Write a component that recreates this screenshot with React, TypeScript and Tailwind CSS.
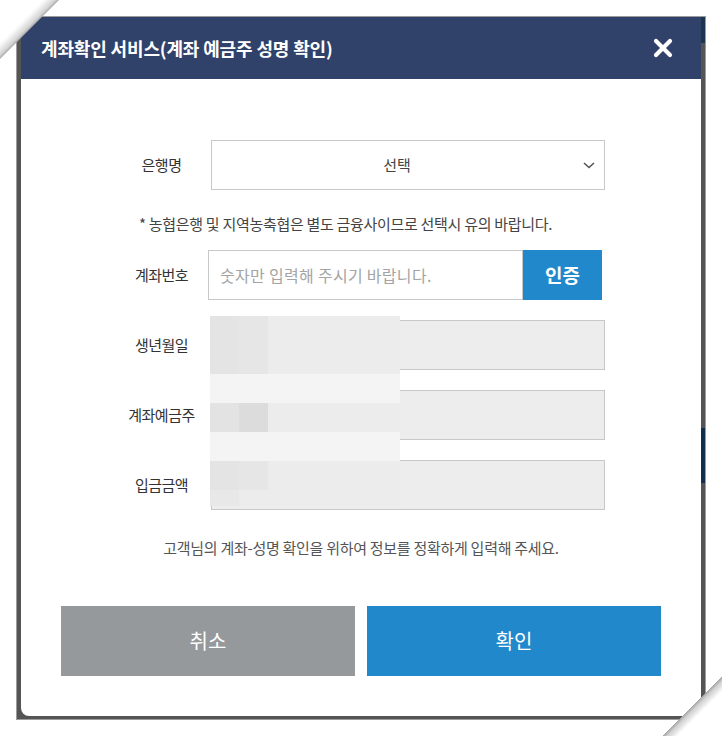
import React from 'react';

// 이름이 가려진 영역(모자이크) 셀
const mosaicRows: { h: string; cells: string[] }[] = [
  { h: 'h-[58px]', cells: ['bg-[#e4e4e4]', 'bg-[#e6e6e6]', 'bg-[#ececec]'] },
  { h: 'h-[29px]', cells: ['bg-[#f4f4f4]', 'bg-[#f4f4f4]', 'bg-[#f4f4f4]'] },
  { h: 'h-[29px]', cells: ['bg-[#e3e3e3]', 'bg-[#dcdcdc]', 'bg-[#ececec]'] },
  { h: 'h-[29px]', cells: ['bg-[#f4f4f4]', 'bg-[#f4f4f4]', 'bg-[#f4f4f4]'] },
  { h: 'h-[29px]', cells: ['bg-[#e4e4e4]', 'bg-[#e6e6e6]', 'bg-[#ececec]'] },
  { h: 'h-[16px]', cells: ['bg-[#e8e8e8]', 'bg-[#ececec]', 'bg-[#ececec]'] },
];

const cellWidths = ['w-[29px]', 'w-[29px]', 'w-[132px]'];

function Label({ children }: { children: React.ReactNode }) {
  return (
    <div className="w-[99px] shrink-0 text-center text-[15px] tracking-[-0.5px] text-[#333]">
      {children}
    </div>
  );
}

function ReadonlyRow({ label }: { label: string }) {
  return (
    <div className="flex items-center h-[50px]">
      <Label>{label}</Label>
      <div className="w-[394px] h-[50px] bg-[#ededed] border border-[#c8c8c8]" />
    </div>
  );
}

export default function App() {
  return (
    <div className="relative min-h-screen bg-white pt-[16px] pl-[16px] overflow-hidden font-['Noto_Sans_CJK_KR','Noto_Sans',sans-serif]">
      {/* frame */}
      <div className="relative w-[690px] h-[704px] border border-[#9c9c9c] bg-[#555555] pl-[4px] pr-[4px] pb-[3px]">
        <div className="absolute right-0 top-0 w-[4px] h-[26px] bg-[#1b3552]" />
        <div className="absolute right-0 top-[411px] w-[4px] h-[55px] bg-[#0d3050]" />

        {/* modal */}
        <div className="relative w-[680px] h-[699px] bg-white rounded-b-lg overflow-hidden">
          <div className="flex items-center justify-between h-[62px] bg-[#30426a] pl-[20px] pr-[28px]">
            <h2 className="text-[18px] font-bold tracking-[-0.15px] text-white">
              계좌확인 서비스(계좌 예금주 성명 확인)
            </h2>
            <button className="w-[20px] h-[20px]" aria-label="닫기">
              <svg viewBox="0 0 20 20" className="w-[20px] h-[20px]">
                <path d="M3 3 L17 17 M17 3 L3 17" stroke="#fff" strokeWidth="4.2" strokeLinecap="round" />
              </svg>
            </button>
          </div>

          <div className="pt-[61px]">
            <div className="pl-[91px]">
              {/* 은행명 */}
              <div className="flex items-center h-[50px]">
                <Label>은행명</Label>
                <div className="relative flex items-center justify-center w-[394px] h-[50px] border border-[#c8c8c8] pr-[22px] text-[15px] text-[#444]">
                  선택
                  <svg viewBox="0 0 12 7" className="absolute right-[9px] top-[21px] w-[12px] h-[7px]">
                    <polyline points="1,1 6,5.5 11,1" fill="none" stroke="#555" strokeWidth="1.6" />
                  </svg>
                </div>
              </div>
            </div>

            <p className="mt-[24px] mb-[16px] pl-[118px] text-[15px] leading-[20px] tracking-[-0.3px] text-[#444]">
              * 농협은행 및 지역농축협은 별도 금융사이므로 선택시 유의 바랍니다.
            </p>

            <div className="pl-[91px] flex flex-col gap-[20px]">
              {/* 계좌번호 */}
              <div className="flex items-center h-[50px]">
                <Label>계좌번호</Label>
                <div className="flex -ml-[3px]">
                  <input
                    className="w-[315px] h-[50px] border border-[#c8c8c8] px-[11px] text-[16px] tracking-[0.3px] text-[#333] placeholder:text-[#a4a4a4] outline-none"
                    placeholder="숫자만 입력해 주시기 바랍니다."
                  />
                  <button className="w-[79px] h-[50px] bg-[#2288cc] text-[19px] font-bold text-white">
                    인증
                  </button>
                </div>
              </div>
              <ReadonlyRow label="생년월일" />
              <ReadonlyRow label="계좌예금주" />
              <ReadonlyRow label="입금금액" />
            </div>

            <p className="mt-[28px] text-center text-[15px] leading-[20px] tracking-[-0.28px] text-[#555]">
              고객님의 계좌-성명 확인을 위하여 정보를 정확하게 입력해 주세요.
            </p>

            <div className="flex gap-[12px] px-[40px] mt-[48px]">
              <button className="w-[294px] h-[70px] bg-[#95999c] text-[20px] text-white">취소</button>
              <button className="w-[294px] h-[70px] bg-[#2288cc] text-[20px] text-white">확인</button>
            </div>
          </div>

          {/* 모자이크 */}
          <div className="absolute left-[189px] top-[299px] flex flex-col">
            {mosaicRows.map((row, i) => (
              <div key={i} className={'flex ' + row.h}>
                {row.cells.map((c, j) => (
                  <div key={j} className={cellWidths[j] + ' h-full ' + c} />
                ))}
              </div>
            ))}
          </div>
        </div>
      </div>

      {/* page curls */}
      <div className="absolute left-0 top-0 w-[60px] h-[60px] bg-[linear-gradient(135deg,#fff_0%,#fff_36%,#d4d4d4_46%,#a8a8a8_49%,transparent_49.3%)]" />
      <div className="absolute left-[662px] top-[676px] w-[60px] h-[60px] bg-[linear-gradient(135deg,transparent_0%,transparent_50%,#a0a0a0_50.3%,#cfcfcf_54%,#fff_63%,#fff_100%)]" />
    </div>
  );
}
